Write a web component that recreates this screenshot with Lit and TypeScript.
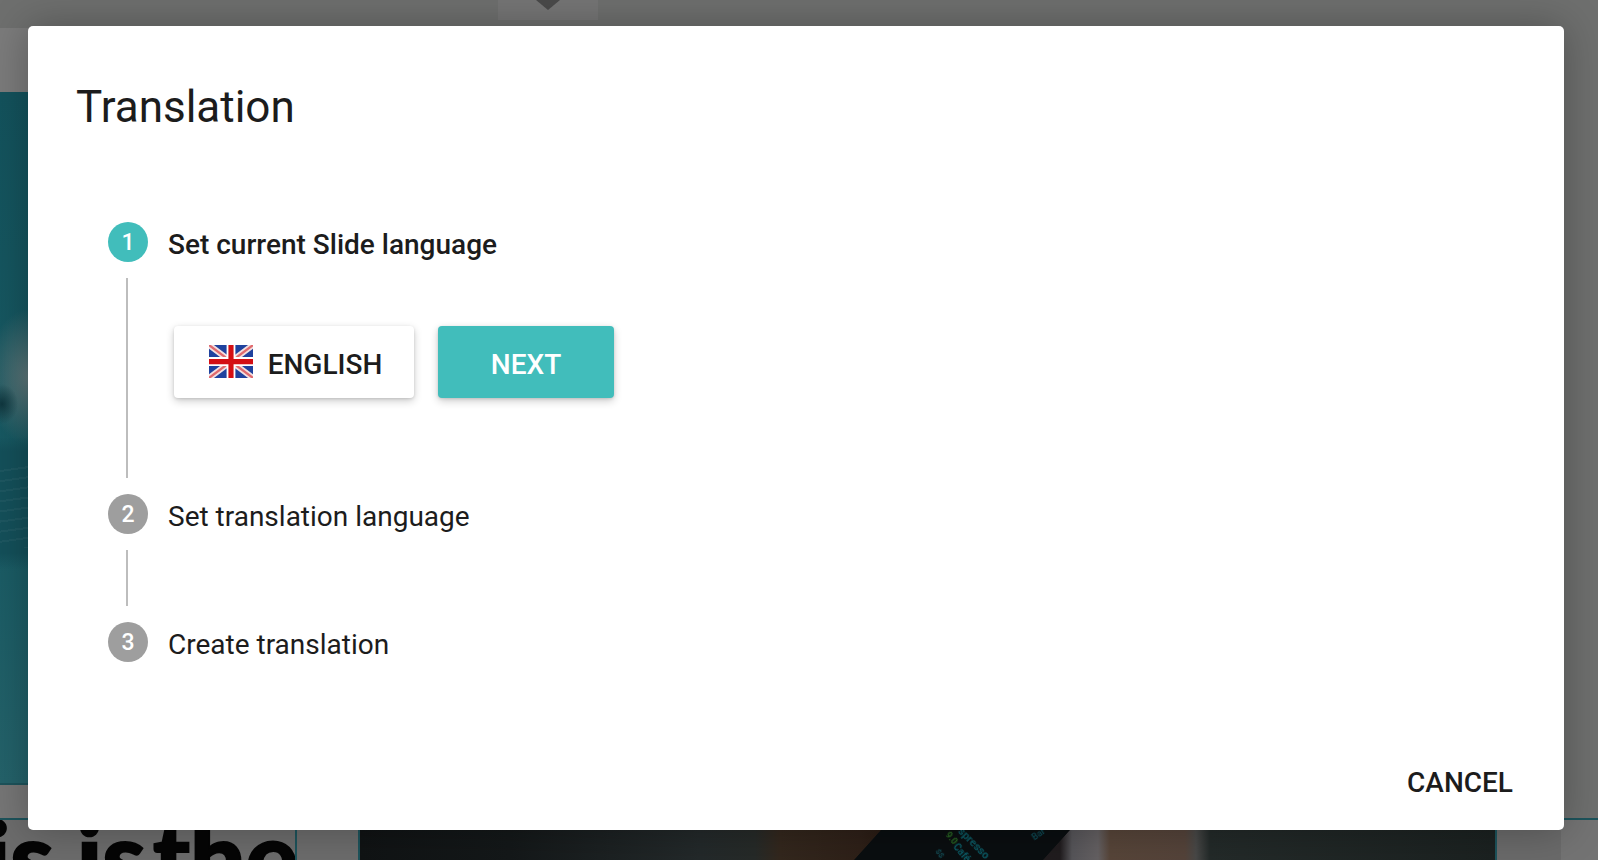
import { LitElement, html, css } from "lit";
import { customElement } from "lit/decorators.js";

@customElement("app-root")
export class AppRoot extends LitElement {
  static styles = css`
    :host {
      display: block;
      position: relative;
      width: 100%;
      height: 100vh;
      overflow: hidden;
      background: #6e6f6e;
      font-family: Roboto, "Liberation Sans", sans-serif;
      color: #1c1c1c;
    }
    .backdrop {
      position: absolute;
      inset: 0;
      display: flex;
      flex-direction: column;
    }
    .top-strip { height: 28px; flex: none; background: #6e6f6e; }
    .band { height: 64px; width: 360px; flex: none; background: #7b7b7b; }
    .teal {
      height: 693px;
      width: 360px;
      flex: none;
      background:
        radial-gradient(ellipse 16px 20px at 2px 312px, rgba(14, 52, 60, 0.95), transparent 100%),
        repeating-linear-gradient(172deg, transparent 0 8px, rgba(150, 175, 178, 0.07) 8px 10px) 0 370px / 40px 86px no-repeat,
        linear-gradient(180deg, transparent 0, #14505a 14px, #14505a 116px, transparent 132px) 0 345px / 40px 132px no-repeat,
        radial-gradient(ellipse 44px 68px at 30px 285px, rgba(120, 128, 128, 0.75), transparent 100%),
        linear-gradient(180deg, #13525c 0%, #185a63 60%, #24626a 100%);
      border-bottom: 2px solid #1d535b;
      box-sizing: border-box;
    }
    .gap { height: 33px; width: 360px; flex: none; background: #767676; }
    .lower {
      flex: 1;
      display: flex;
      border-top: 2px solid #1d535b;
      position: relative;
      background: #6c6c6c;
    }
    .headline-box {
      width: 295px;
      flex: none;
      position: relative;
      overflow: hidden;
      border-right: 2px solid #1d535b;
    }
    .headline {
      position: absolute;
      right: -3px;
      top: -14px;
      font: 900 98px/1 Lato, "Liberation Sans", sans-serif;
      word-spacing: 0;
      color: #050505;
      -webkit-text-stroke: 2px #050505;
      white-space: nowrap;
    }
    .tight { word-spacing: -16px; }
    .spacer { width: 61px; flex: none; border-right: 2px solid #1d535b; }
    .photo {
      width: 1135px;
      flex: none;
      position: relative;
      overflow: hidden;
      border-right: 2px solid #1d535b;
      background:
        linear-gradient(90deg,
          #101314 0, #141819 150px, #23292a 340px, #262a28 395px,
          #33271d 420px, #2e2018 500px, #2a1c14 520px,
          #20191a 530px, #201c1e 700px,
          #565559 712px, #646062 738px, #574539 750px, #54433a 825px,
          #484847 836px, #232a29 850px, #1b2120 1135px);
    }
    .phone {
      position: absolute;
      left: 539px;
      top: -10px;
      width: 189px;
      height: 60px;
      background: #0a0e10;
      transform: skewX(-42deg);
      transform-origin: top left;
      filter: blur(0.6px);
    }
    .phone-text {
      position: absolute;
      white-space: nowrap;
      font: 700 11px/1 Roboto, sans-serif;
      transform-origin: left center;
      filter: blur(0.6px);
      color: #0b5a64;
    }
    .t1 { left: 600px; top: 4px; transform: rotate(45deg); }
    .t2 { left: 595px; top: 20px; transform: rotate(50deg); font-size: 10px; }
    .t3 { left: 587px; top: 9px; transform: rotate(50deg); font-size: 9px; color: #2a6c24; }
    .t4 { left: 577px; top: 26px; transform: rotate(55deg); font-size: 8px; color: #14505a; }
    .t5 { left: 673px; top: 14px; transform: rotate(-35deg); font-size: 9px; color: #0d4650; }
    .end {
      flex: 1;
      background: linear-gradient(90deg, #6a6a6a 0, #6a6a6a 64px, #737373 64px);
    }
    .tab {
      position: absolute;
      left: 498px;
      top: 0;
      width: 100px;
      height: 20px;
      background: #757575;
    }
    .tab::after {
      content: "";
      position: absolute;
      left: 38px;
      top: 0;
      border: 12px solid transparent;
      border-top: 10px solid #4a4a4a;
      border-bottom: 0;
    }
    .modal {
      position: absolute;
      left: 28px;
      top: 26px;
      width: 1536px;
      height: 804px;
      box-sizing: border-box;
      background: #fff;
      border-radius: 5px;
      box-shadow: 0 0 40px rgba(0, 0, 0, 0.28);
      padding: 56px 51px 29px 48px;
      display: flex;
      flex-direction: column;
    }
    h1 {
      margin: 0;
      font-size: 44px;
      font-weight: 400;
      line-height: 50px;
    }
    .stepper {
      margin-top: 90px;
      padding-left: 32px;
      display: flex;
      flex-direction: column;
    }
    .step-head {
      display: flex;
      align-items: flex-start;
      gap: 20px;
      height: 40px;
    }
    .circle {
      width: 40px;
      height: 40px;
      flex: none;
      border-radius: 50%;
      background: #9e9e9e;
      color: #fff;
      font-size: 23px;
      font-weight: 500;
      line-height: 41px;
      text-align: center;
    }
    .circle.on { background: #41bdbb; }
    .label {
      font-size: 28px;
      line-height: 40px;
      padding-top: 3px;
      white-space: nowrap;
    }
    .label.on { font-weight: 500; }
    .connector {
      margin: 16px 0 16px 18px;
      border-left: 2px solid #bdbdbd;
    }
    .connector.short { height: 56px; }
    .connector.open {
      height: 200px;
      box-sizing: border-box;
      padding: 48px 0 0 46px;
      display: flex;
      gap: 24px;
      align-items: flex-start;
    }
    button {
      font: 500 28px/1 Roboto, "Liberation Sans", sans-serif;
      border: 0;
      border-radius: 4px;
      height: 72px;
      padding: 0;
      display: flex;
      align-items: center;
      justify-content: center;
      box-shadow: 0 3px 8px rgba(0, 0, 0, 0.2), 0 1px 3px rgba(0, 0, 0, 0.12);
      box-sizing: border-box;
    }
    .lang { width: 240px; background: #fff; color: #1c1c1c; gap: 15px; padding-left: 3px; }
    .lang span, .next span { padding-top: 5px; }
    .next { width: 176px; background: #41bdbb; color: #fff; }
    .flag { width: 44px; height: 33px; display: block; margin-top: -2px; filter: blur(0.6px); }
    .footer { margin-top: auto; display: flex; justify-content: flex-end; }
    .cancel {
      background: none;
      box-shadow: none;
      color: #1c1c1c;
      height: 36px;
    }
  `;

  render() {
    return html`
      <div class="backdrop">
        <div class="top-strip"></div>
        <div class="band"></div>
        <div class="teal"></div>
        <div class="gap"></div>
        <div class="lower">
          <div class="headline-box"><div class="headline">This <span class="tight">is the</span></div></div>
          <div class="spacer"></div>
          <div class="photo">
            <div class="phone"></div>
            <span class="phone-text t1">spresso</span>
            <span class="phone-text t2">Café</span>
            <span class="phone-text t3">9.0</span>
            <span class="phone-text t4">$$</span>
            <span class="phone-text t5">Bar</span>
          </div>
          <div class="end"></div>
        </div>
      </div>
      <div class="tab"></div>
      <div class="modal">
        <h1>Translation</h1>
        <div class="stepper">
          <div class="step-head">
            <div class="circle on">1</div>
            <div class="label on">Set current Slide language</div>
          </div>
          <div class="connector open">
            <button class="lang">
              <svg class="flag" viewBox="0 0 60 44" preserveAspectRatio="none">
                <rect width="60" height="44" fill="#1f429e" />
                <path d="M0 0L60 44M60 0L0 44" stroke="#f2dfe0" stroke-width="8" />
                <path d="M0 0L60 44M60 0L0 44" stroke="#e06a6e" stroke-width="3" />
                <path d="M30 0V44M0 22H60" stroke="#fff" stroke-width="12" />
                <path d="M30 0V44M0 22H60" stroke="#d40f14" stroke-width="7" />
              </svg>
              <span>ENGLISH</span>
            </button>
            <button class="next"><span>NEXT</span></button>
          </div>
          <div class="step-head">
            <div class="circle">2</div>
            <div class="label">Set translation language</div>
          </div>
          <div class="connector short"></div>
          <div class="step-head">
            <div class="circle">3</div>
            <div class="label">Create translation</div>
          </div>
        </div>
        <div class="footer"><button class="cancel">CANCEL</button></div>
      </div>
    `;
  }
}
